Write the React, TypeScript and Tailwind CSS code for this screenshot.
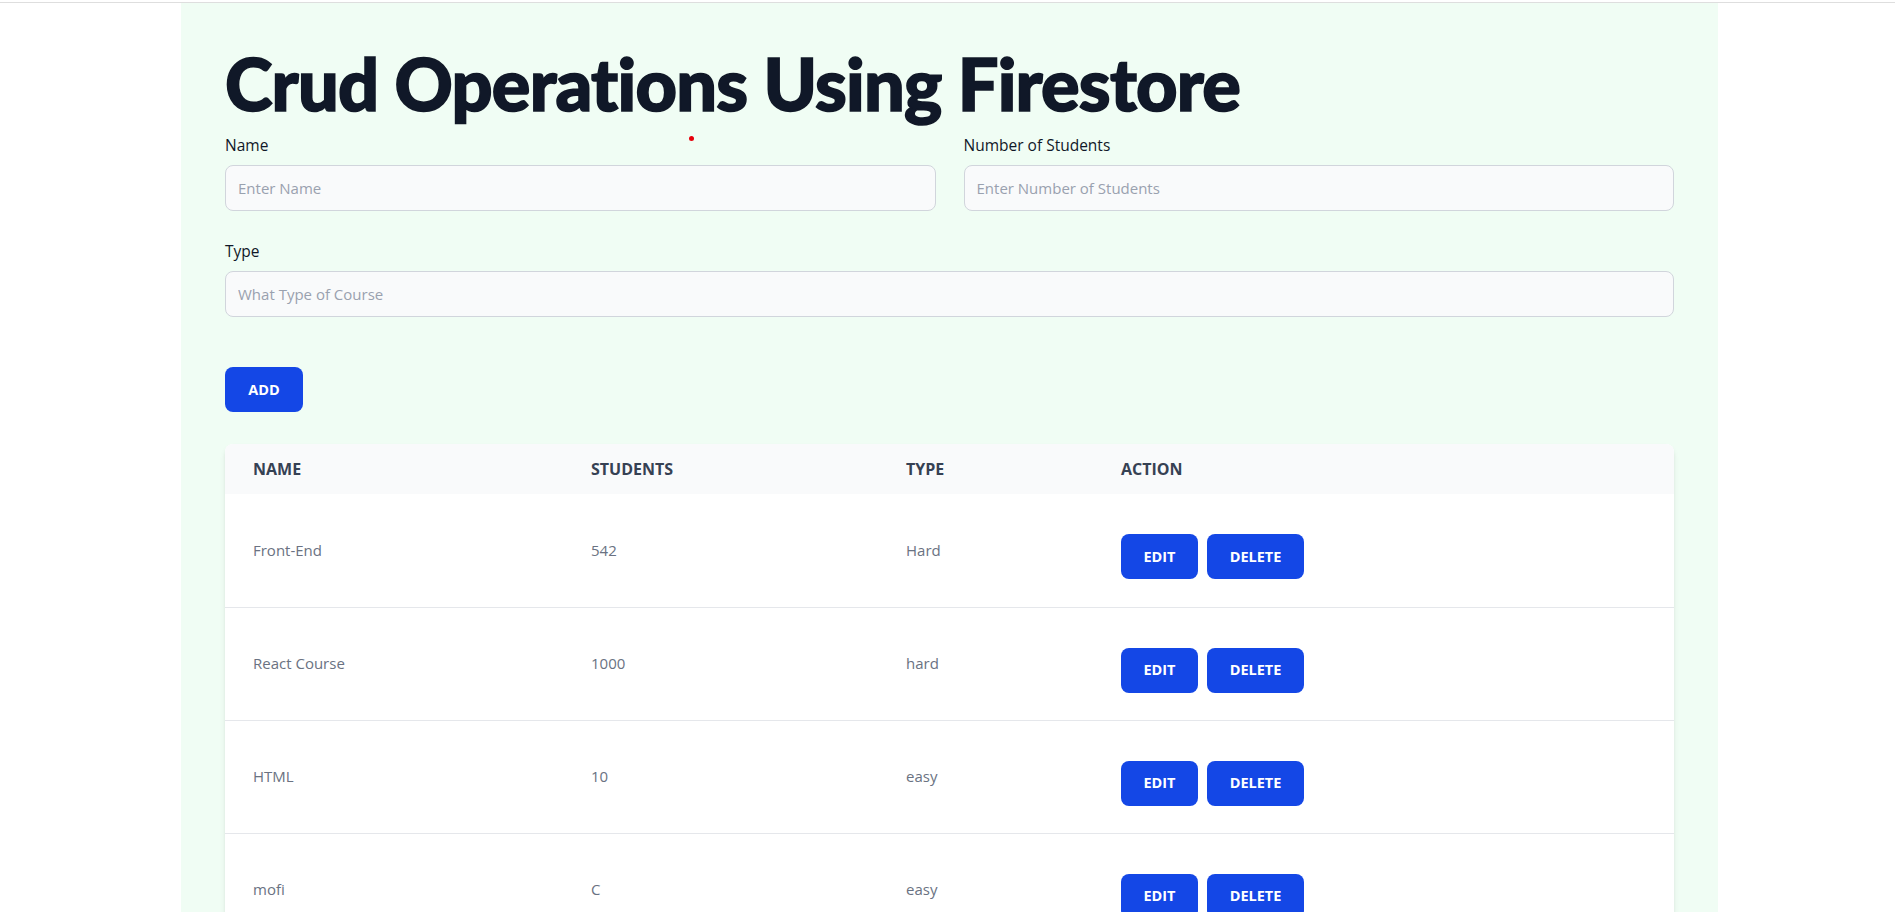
import React from 'react';

interface Course {
    name: string;
    students: string;
    type: string;
}

const courses: Course[] = [
    { name: 'Front-End', students: '542', type: 'Hard' },
    { name: 'React Course', students: '1000', type: 'hard' },
    { name: 'HTML', students: '10', type: 'easy' },
    { name: 'mofi', students: 'C', type: 'easy' },
];

const bodyFont = { fontFamily: '"Open Sans", "Noto Sans", sans-serif' };

const Field: React.FC<{ label: string; placeholder: string; className?: string }> = ({ label, placeholder, className }) => (
    <div className={className}>
        <label className="block mb-2 text-[15.5px] leading-6 font-medium text-gray-900">{label}</label>
        <input
            type="text"
            placeholder={placeholder}
            className="block w-full h-[46px] px-3 bg-gray-50 border border-gray-300 rounded-lg text-[15px] text-gray-900 placeholder:text-gray-400 outline-none"
        />
    </div>
);

const App: React.FC = () => {
    return (
        <div className="min-h-screen bg-white pt-[2px]" style={bodyFont}>
            <div className="border-t border-[#dedede] pl-[4px]">
                <div className="relative max-w-[1537px] mx-auto min-h-[920px] bg-green-50 px-11 pt-[44px] pb-10">
                    {/* title */}
                    <h1
                        className="text-[72px] leading-none font-black text-gray-900 tracking-[-0.8px] [-webkit-text-stroke:1.6px_#111827]"
                        style={{ fontFamily: 'Lato, "Open Sans", sans-serif' }}
                    >
                        Crud Operations Using Firestore
                    </h1>

                    {/* cursor dot */}
                    <span className="absolute left-[508px] top-[133px] w-[5px] h-[5px] rounded-full bg-red-600" />

                    {/* form */}
                    <div className="mt-[14px] grid grid-cols-2 gap-x-7 gap-y-[28px]">
                        <Field label="Name" placeholder="Enter Name" />
                        <Field label="Number of Students" placeholder="Enter Number of Students" />
                        <Field label="Type" placeholder="What Type of Course" className="col-span-2" />
                    </div>

                    <button className="mt-[50px] w-[78px] h-[45px] rounded-lg bg-blue-700 text-white text-[14.5px] font-bold">
                        ADD
                    </button>

                    {/* table */}
                    <div className="mt-8 bg-white rounded-lg shadow-md overflow-hidden">
                        <table className="w-full table-fixed text-left">
                            <thead className="bg-gray-50">
                                <tr className="h-[50px] text-[16px] font-bold uppercase text-gray-700">
                                    <th className="w-[338px] px-7">Name</th>
                                    <th className="w-[315px] px-7">Students</th>
                                    <th className="w-[215px] px-7">Type</th>
                                    <th className="px-7">Action</th>
                                </tr>
                            </thead>
                            <tbody>
                                {courses.map((c, i) => (
                                    <tr key={i} className="border-b border-gray-200 text-[15px] text-gray-500">
                                        <td className="h-[113px] px-7 align-middle">{c.name}</td>
                                        <td className="px-7 align-middle">{c.students}</td>
                                        <td className="px-7 align-middle">{c.type}</td>
                                        <td className="px-7 align-middle">
                                            <div className="mt-[13px] flex gap-[9px]">
                                                <button className="w-[77px] h-[45px] rounded-lg bg-blue-700 text-white text-[14.5px] font-bold">
                                                    EDIT
                                                </button>
                                                <button className="w-[97px] h-[45px] rounded-lg bg-blue-700 text-white text-[14.5px] font-bold">
                                                    DELETE
                                                </button>
                                            </div>
                                        </td>
                                    </tr>
                                ))}
                            </tbody>
                        </table>
                    </div>
                </div>
            </div>
        </div>
    );
};

export default App;
